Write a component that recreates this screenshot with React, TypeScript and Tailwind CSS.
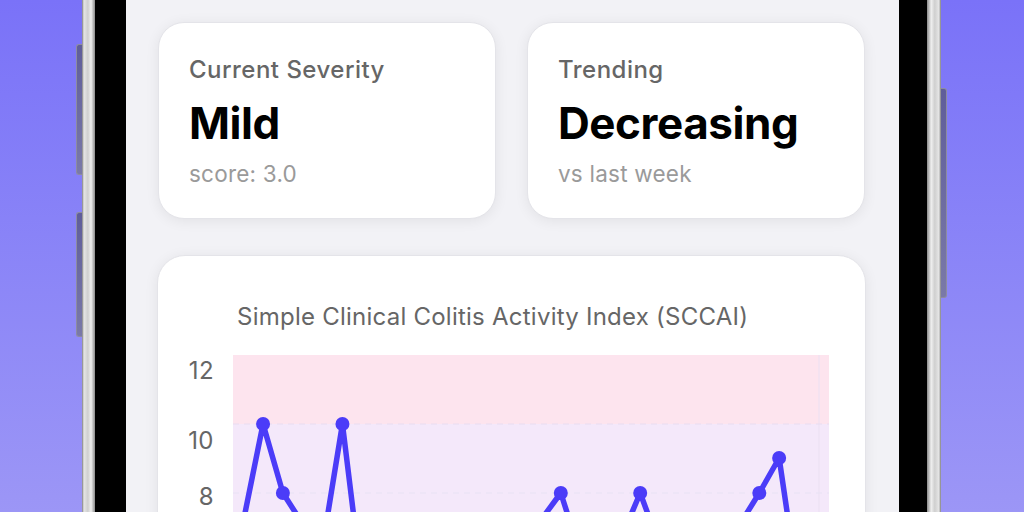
const XS = Array.from({ length: 30 }, (_, i) => 10.2 + 19.85 * i)

// page-y values minus the plot top (355)
const YS = [
  167, 69, 138, 169, 191, 69, 231, 240, 235, 245, 238, 242, 236, 240, 230, 165, 138, 200, 215, 185, 138,
  192, 230, 240, 215, 170, 138, 103, 238, 230,
]

const LINE = '#4b3cf8'

function StatCard({ label, value, sub }: { label: string; value: string; sub: string }) {
  return (
    <div className="w-[338px] h-[197px] rounded-[26px] bg-white border border-[#e4e4e9] shadow-[0_2px_14px_rgba(0,0,0,0.07)] pl-[30px] pt-[33px]">
      <div className="text-[24px] leading-[28px] font-medium tracking-[0.02em] text-[#666]">{label}</div>
      <div className="mt-[13px] text-[44px] leading-[52px] font-bold text-black tracking-[-0.01em]">{value}</div>
      <div className="mt-[11px] text-[22.5px] leading-[28px] tracking-[0.01em] text-[#9a9a9a]">{sub}</div>
    </div>
  )
}

function Chart() {
  const pts = XS.map((x, i) => `${x},${YS[i]}`).join(' ')
  return (
    <svg width="596" height="240" viewBox="0 0 596 240" className="block">
      <rect x="0" y="0" width="596" height="69" fill="#fde4ee" />
      <rect x="0" y="69" width="596" height="171" fill="#f4e8fa" />
      <line x1="586" y1="0" x2="586" y2="240" stroke="#ebe0f2" strokeWidth="1" />
      <line x1="0" y1="69" x2="596" y2="69" stroke="#e8dcf0" strokeWidth="1" strokeDasharray="6 5" />
      <line x1="0" y1="138" x2="596" y2="138" stroke="#e8e2f4" strokeWidth="1" strokeDasharray="6 5" />
      <polyline points={pts} fill="none" stroke={LINE} strokeWidth="5.5" strokeLinejoin="round" strokeLinecap="round" />
      {XS.map((x, i) => (
        <circle key={i} cx={x} cy={YS[i]} r="7" fill={LINE} />
      ))}
    </svg>
  )
}

export default function App() {
  return (
    <div
      className="h-[512px] w-[1024px] overflow-hidden flex bg-gradient-to-b from-[#7a72f8] to-[#9c96f6]"
      style={{ fontFamily: 'Inter, "Noto Sans", sans-serif' }}
    >
      <div className="w-[76px] shrink-0" />
      {/* left side buttons */}
      <div className="w-[6px] shrink-0 flex flex-col">
        <div className="mt-[44px] h-[131px] rounded-l-[3px] border border-r-0 border-[#8d8ca0] bg-gradient-to-b from-[#5f5d9a] to-[#7a79a8]" />
        <div className="mt-[37px] h-[125px] rounded-l-[3px] border border-r-0 border-[#8d8ca0] bg-gradient-to-b from-[#5f5d9a] to-[#7a79a8]" />
      </div>
      <div className="w-[13px] shrink-0 bg-[linear-gradient(to_right,#7d7d7d,#e6e6e6_15%,#cfcfcf_45%,#efefef_70%,#8a8a8a)]" />
      <div className="w-[31px] shrink-0 bg-black" />

      {/* screen */}
      <div className="w-[773px] shrink-0 bg-[#f2f2f6] px-[32px] pt-[22px]">
        <div className="flex gap-[31px]">
          <StatCard label="Current Severity" value="Mild" sub="score: 3.0" />
          <StatCard label="Trending" value="Decreasing" sub="vs last week" />
        </div>

        <div className="mt-[36px] -ml-px w-[709px] h-[400px] rounded-[28px] bg-white border border-[#e4e4e9] shadow-[0_2px_14px_rgba(0,0,0,0.07)] pt-[46px]">
          <div className="pl-[79px] text-[24px] leading-[30px] tracking-[0.01em] text-[#666]">
            Simple Clinical Colitis Activity Index (SCCAI)
          </div>
          <div className="mt-[23px] flex">
            <div className="w-[56px] shrink-0 text-right text-[24px] leading-[28px] tracking-[0.02em] text-[#666]">
              <div className="mt-[2px]">12</div>
              <div className="mt-[42px]">10</div>
              <div className="mt-[28px]">8</div>
            </div>
            <div className="ml-[19px]">
              <Chart />
            </div>
          </div>
        </div>
      </div>

      <div className="w-[28px] shrink-0 bg-black" />
      <div className="w-[14px] shrink-0 bg-[linear-gradient(to_right,#8a8a8a,#efefef_30%,#cfcfcf_55%,#e6e6e6_85%,#7d7d7d)]" />
      <div className="w-[6px] shrink-0 flex flex-col">
        <div className="mt-[88px] h-[210px] rounded-r-[3px] border border-l-0 border-[#8d8ca0] bg-gradient-to-b from-[#5f5d9a] to-[#7a79a8]" />
      </div>
    </div>
  )
}
